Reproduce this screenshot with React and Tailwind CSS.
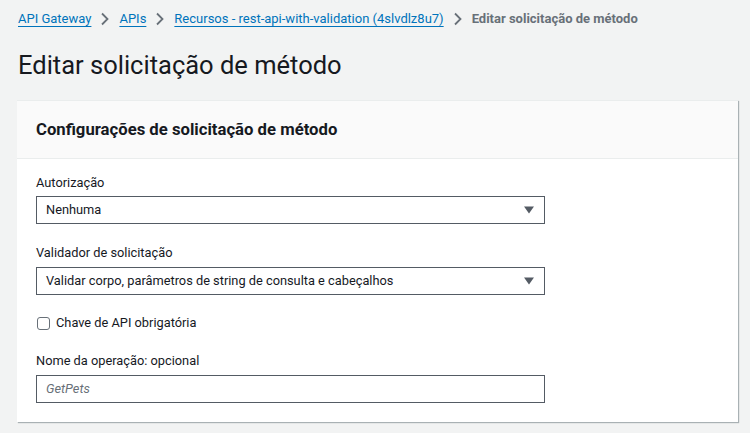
import React from "react";

const font = { fontFamily: 'Roboto, "Open Sans", Arial, sans-serif' };

function Chevron() {
  return (
    <svg width="10" height="14" viewBox="0 0 10 14" className="mx-[9px]">
      <path d="M2 1.5 L7.5 7 L2 12.5" fill="none" stroke="#687078" strokeWidth="1.8" />
    </svg>
  );
}

function Caret() {
  return (
    <svg width="10" height="8" viewBox="0 0 10 8">
      <path d="M0 0.5 H10 L5 7.5 Z" fill="#545b64" />
    </svg>
  );
}

function Select({ children }) {
  return (
    <div className="flex h-[28px] w-[509px] items-center justify-between border border-[#545b64] bg-white pl-[9px] pr-[10px] text-[12.8px] text-[#16191f]">
      <span>{children}</span>
      <Caret />
    </div>
  );
}

export default function App() {
  return (
    <div style={font} className="h-[433px] w-[750px] overflow-hidden bg-[#f2f3f3] text-[#16191f]">
      <nav className="flex h-[36px] items-center pl-[18px] pt-[1px] text-[13px]">
        <a className="text-[#0073bb] underline underline-offset-[3px]">API Gateway</a>
        <Chevron />
        <a className="text-[#0073bb] underline underline-offset-[3px]">APIs</a>
        <Chevron />
        <a className="text-[#0073bb] underline underline-offset-[3px]">Recursos - rest-api-with-validation (4slvdlz8u7)</a>
        <Chevron />
        <span className="font-bold text-[#687078]">Editar solicitação de método</span>
      </nav>
      <h1 className="flex h-[64px] items-start pl-[18px] pt-[13px] text-[25.5px] leading-[32px] text-[#16191f]">
        Editar solicitação de método
      </h1>
      <section className="ml-[17px] w-[721px] border-t border-[#eaeded] bg-white shadow-[1px_1px_1px_0_rgba(0,28,36,0.3)]">
        <header className="flex h-[58px] items-center border-b border-[#eaeded] bg-[#fafafa] pl-[19px]">
          <h2 className="text-[16.7px] font-bold">Configurações de solicitação de método</h2>
        </header>
        <div className="flex flex-col pl-[19px] pb-[19px] pt-[14px] text-[12.8px]">
          <label className="mb-[3px] leading-[20px]">Autorização</label>
          <Select>Nenhuma</Select>
          <label className="mb-[4px] mt-[19px] leading-[20px]">Validador de solicitação</label>
          <Select>Validar corpo, parâmetros de string de consulta e cabeçalhos</Select>
          <div className="mt-[18px] flex items-center leading-[20px]">
            <span className="ml-[1px] mr-[6px] inline-block h-[13px] w-[13px] rounded-[3px] border border-[#687078] bg-white" />
            <span>Chave de API obrigatória</span>
          </div>
          <label className="mb-[4px] mt-[18px] leading-[20px]">Nome da operação: opcional</label>
          <div className="flex h-[28px] w-[509px] items-center border border-[#545b64] bg-white pl-[9px] text-[12.8px] italic text-[#687078]">
            GetPets
          </div>
        </div>
      </section>
    </div>
  );
}
